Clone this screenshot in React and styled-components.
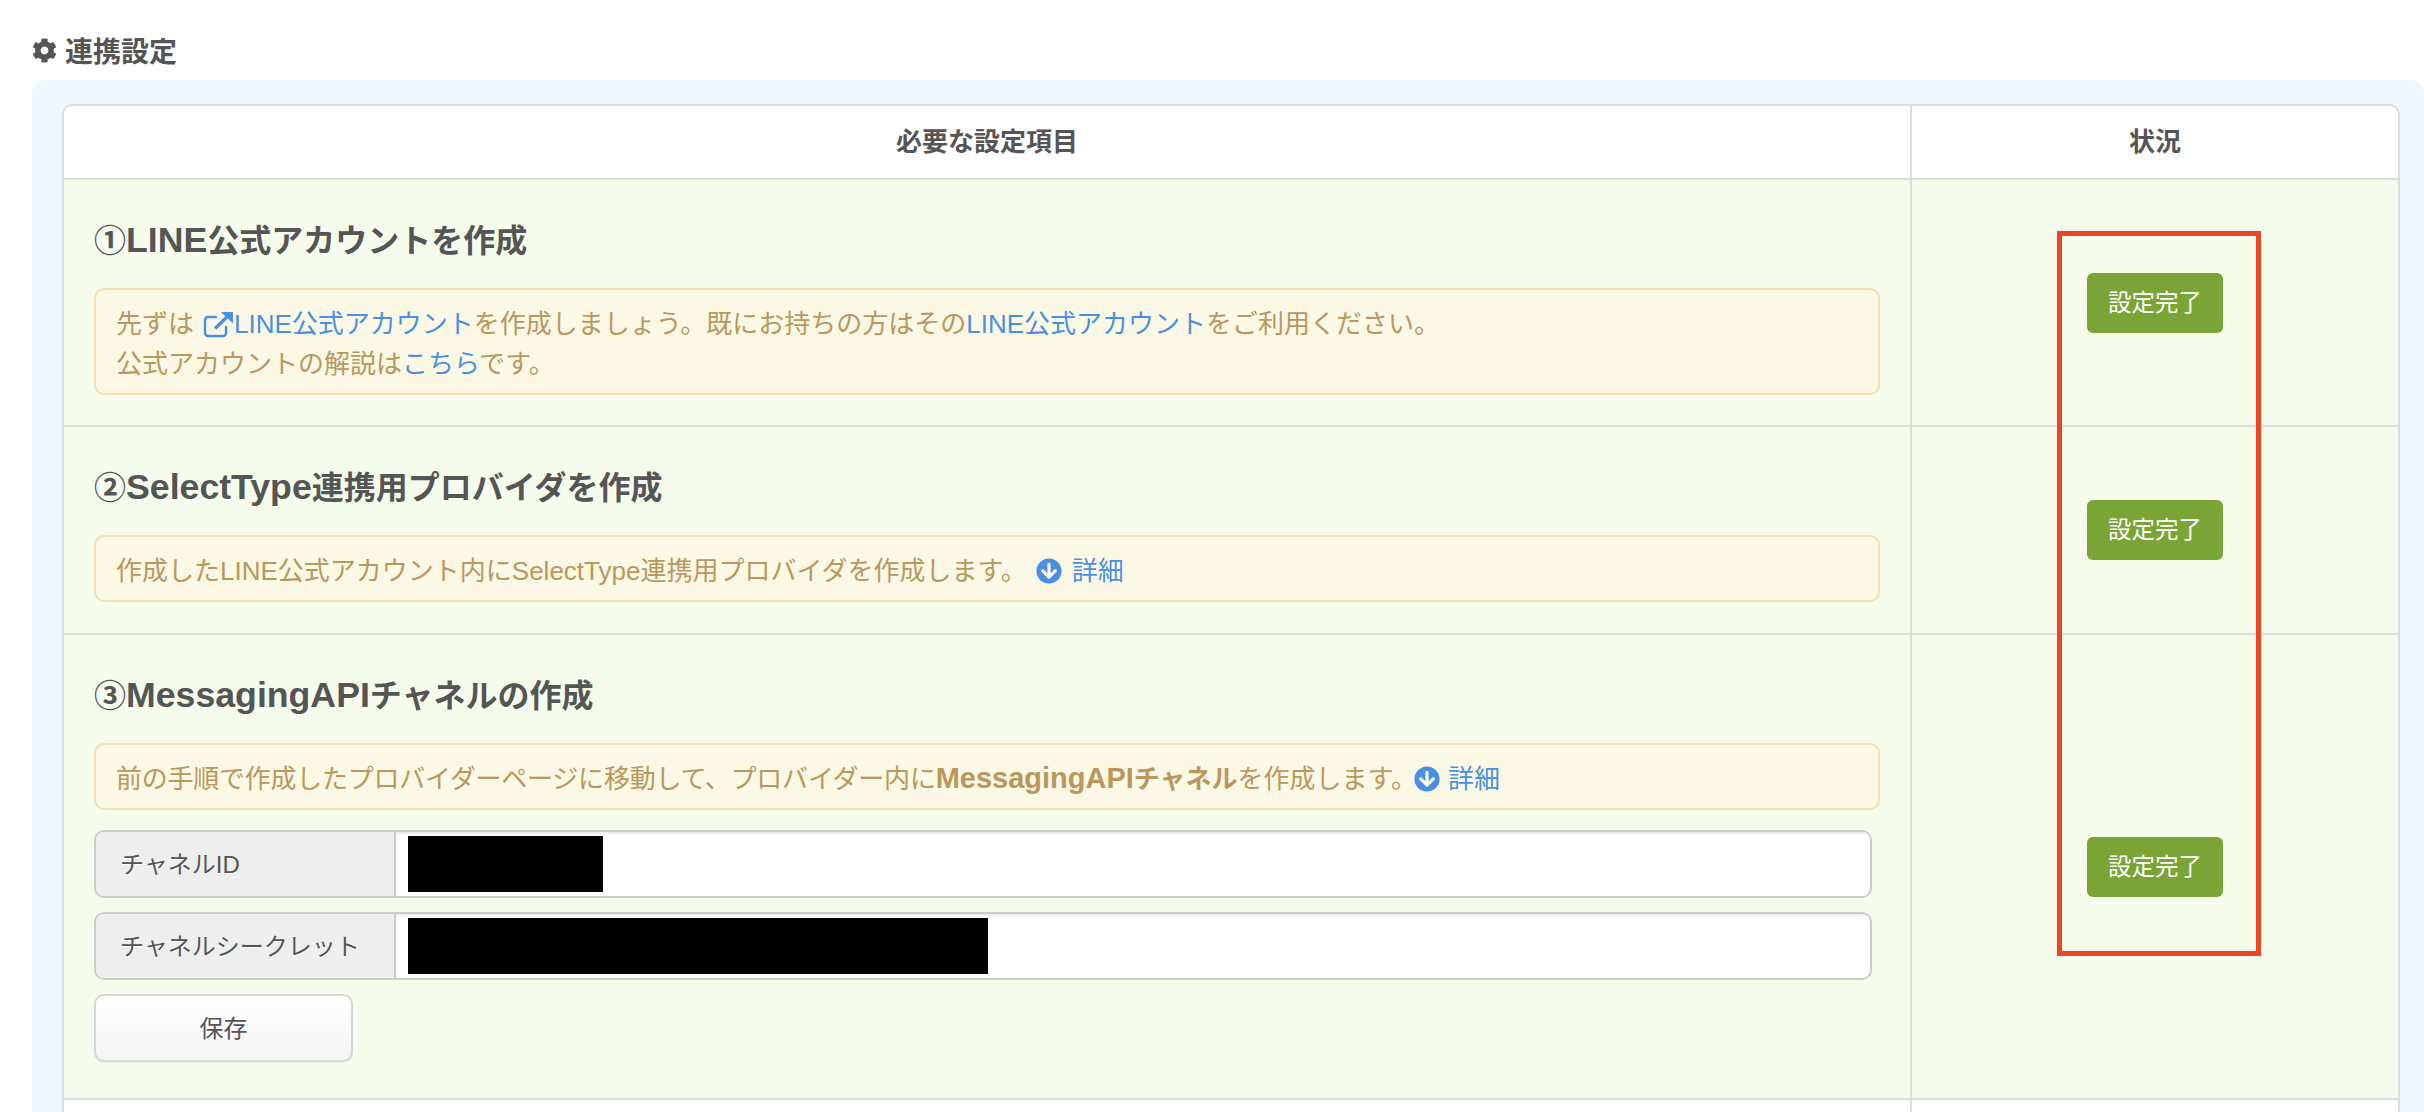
import React from "react";
import styled, { createGlobalStyle } from "styled-components";
import { FaCog, FaArrowCircleDown } from "react-icons/fa";

const GlobalStyle = createGlobalStyle`
  html, body {
    margin: 0;
    height: 1112px;
    overflow: hidden;
    background: #fff;
    font-family: "Liberation Sans", "Noto Sans CJK JP", sans-serif;
    color: #555;
  }
`;

const Page = styled.div`
  height: 1112px;
  box-sizing: border-box;
  overflow: hidden;
  padding: 30px 0 0 32px;
`;

const Title = styled.h2`
  display: flex;
  align-items: center;
  gap: 8px;
  margin: 0 0 10px;
  height: 40px;
  font-size: 28px;
  font-weight: bold;
  color: #555;
  svg {
    font-size: 25px;
  }
`;

const Panel = styled.section`
  background: #eff6fe;
  border-radius: 14px 14px 0 0;
  padding: 24px 24px 0 30px;
`;

const Table = styled.div`
  position: relative;
  border: 2px solid #ddd;
  border-radius: 10px 10px 0 0;
  background: #fff;
`;

const Row = styled.div`
  display: grid;
  grid-template-columns: 1846px 1fr;
  background: ${p => (p.$done ? "#f5fcec" : "#fff")};
  border-bottom: 2px solid #ddd;
  min-height: ${p => p.$minHeight || 0}px;
  border-radius: ${p => (p.$head ? "10px 10px 0 0" : "0")};
`;

const HeadCell = styled.div`
  height: 72px;
  line-height: 72px;
  text-align: center;
  font-size: 26px;
  font-weight: bold;
  color: #555;
  & + & {
    border-left: 2px solid #ddd;
  }
`;

const StepCell = styled.div`
  padding: 32px 30px ${p => p.$bottom || 30}px 30px;
`;

const StatusCell = styled.div`
  display: flex;
  align-items: center;
  justify-content: center;
  border-left: 2px solid #ddd;
`;

const StepTitle = styled.h3`
  margin: 0 0 18px;
  font-size: 32px;
  line-height: 58px;
  font-weight: bold;
  color: #555;
`;

const Latin = styled.span`
  font-size: 1.115em;
  line-height: 1;
`;

const Notice = styled.div`
  padding: 14px 20px 9px;
  background: #fbf8e5;
  border: 2px solid #f5deb0;
  border-radius: 10px;
  color: #ba975c;
  font-size: 26px;
  line-height: 40px;
  margin-bottom: ${p => p.$gap || 0}px;
  b {
    font-weight: bold;
  }
`;

const Tight = styled.span`
  letter-spacing: -0.24px;
`;

const TextLink = styled.a`
  color: #4a90e2;
  text-decoration: none;
`;

const DetailLink = styled.a`
  display: inline-flex;
  align-items: center;
  gap: ${p => p.$gap}px;
  margin-left: ${p => p.$offset}px;
  color: #4a90e2;
  vertical-align: top;
  svg {
    font-size: 26px;
  }
`;

const ExternalIcon = styled.svg`
  width: 31px;
  height: 27px;
  margin-left: 9px;
  vertical-align: -5px;
`;

const InputGroup = styled.div`
  display: grid;
  grid-template-columns: 300px 1fr;
  height: 68px;
  box-sizing: border-box;
  width: 1778px;
  border: 2px solid #ccc;
  border-radius: 10px;
  overflow: hidden;
  margin-bottom: 14px;
`;

const InputLabel = styled.div`
  display: flex;
  align-items: center;
  padding: 0 0 4px 24px;
  background: #eee;
  border-right: 2px solid #ccc;
  color: #555;
  font-size: 24px;
  text-shadow: 0 1px 0 #fff;
`;

const InputBody = styled.div`
  background: #fff;
  padding: 4px 12px;
  box-shadow: inset 0 2px 2px rgba(0, 0, 0, 0.08);
`;

const Redacted = styled.div`
  width: ${p => p.$width}px;
  height: 56px;
  background: #000;
`;

const SaveButton = styled.button`
  display: block;
  width: 259px;
  height: 68px;
  margin: 0;
  padding: 0 0 4px;
  background: linear-gradient(#fff, #f4f4f4);
  border: 2px solid #d6d6d6;
  border-radius: 10px;
  color: #555;
  font-family: inherit;
  font-size: 24px;
  box-shadow: 0 1px 1px rgba(0, 0, 0, 0.06);
`;

const DoneBadge = styled.span`
  display: block;
  width: 136px;
  height: 60px;
  line-height: 60px;
  text-align: center;
  background: #7aa436;
  border-radius: 6px;
  color: #fff;
  font-size: 23.5px;
`;

const Annotation = styled.div`
  position: absolute;
  top: 125px;
  left: 1993px;
  width: 204px;
  height: 725px;
  box-sizing: border-box;
  border: 5px solid #ee4423;
  pointer-events: none;
`;

export default function App() {
  return (
    <Page>
      <GlobalStyle />
      <Title>
        <FaCog />
        連携設定
      </Title>
      <Panel>
        <Table>
          <Row $head>
            <HeadCell>必要な設定項目</HeadCell>
            <HeadCell>状況</HeadCell>
          </Row>

          <Row $done>
            <StepCell>
              <StepTitle>①<Latin>LINE</Latin>公式アカウントを作成</StepTitle>
              <Notice>
                先ずは
                <ExternalIcon viewBox="0 0 31 27" fill="none">
                  <path
                    d="M13 6H5a3 3 0 0 0-3 3v13a3 3 0 0 0 3 3h15a3 3 0 0 0 3-3v-6"
                    stroke="#4a90e2"
                    strokeWidth="2.4"
                    strokeLinecap="round"
                  />
                  <path d="M12 17.5 25 5" stroke="#4a90e2" strokeWidth="3.4" />
                  <path d="M18 1h12v11.5z" fill="#4a90e2" />
                </ExternalIcon>
                <TextLink>LINE公式アカウント</TextLink>
                を作成しましょう。既にお持ちの方はその
                <TextLink>LINE公式アカウント</TextLink>
                をご利用ください。
                <br />
                公式アカウントの解説は
                <TextLink>こちら</TextLink>
                です。
              </Notice>
            </StepCell>
            <StatusCell>
              <DoneBadge>設定完了</DoneBadge>
            </StatusCell>
          </Row>

          <Row $done>
            <StepCell $bottom={31}>
              <StepTitle>②<Latin>SelectType</Latin>連携用プロバイダを作成</StepTitle>
              <Notice>
                作成したLINE公式アカウント内にSelectType連携用プロバイダを作成します。
                <DetailLink $offset={9} $gap={10}>
                  <FaArrowCircleDown />
                  詳細
                </DetailLink>
              </Notice>
            </StepCell>
            <StatusCell>
              <DoneBadge>設定完了</DoneBadge>
            </StatusCell>
          </Row>

          <Row $done>
            <StepCell $bottom={36}>
              <StepTitle>③<Latin>MessagingAPI</Latin>チャネルの作成</StepTitle>
              <Notice $gap={20}>
                <Tight>前の手順で作成したプロバイダーページに移動して、プロバイダー内に</Tight>
                <b><Latin>MessagingAPI</Latin>チャネル</b>
                を作成します。
                <DetailLink $offset={-3} $gap={8}>
                  <FaArrowCircleDown />
                  詳細
                </DetailLink>
              </Notice>
              <InputGroup>
                <InputLabel>チャネルID</InputLabel>
                <InputBody>
                  <Redacted $width={195} />
                </InputBody>
              </InputGroup>
              <InputGroup>
                <InputLabel>チャネルシークレット</InputLabel>
                <InputBody>
                  <Redacted $width={580} />
                </InputBody>
              </InputGroup>
              <SaveButton>保存</SaveButton>
            </StepCell>
            <StatusCell>
              <DoneBadge>設定完了</DoneBadge>
            </StatusCell>
          </Row>

          <Row $minHeight={80}>
            <div />
            <StatusCell />
          </Row>

          <Annotation />
        </Table>
      </Panel>
    </Page>
  );
}
